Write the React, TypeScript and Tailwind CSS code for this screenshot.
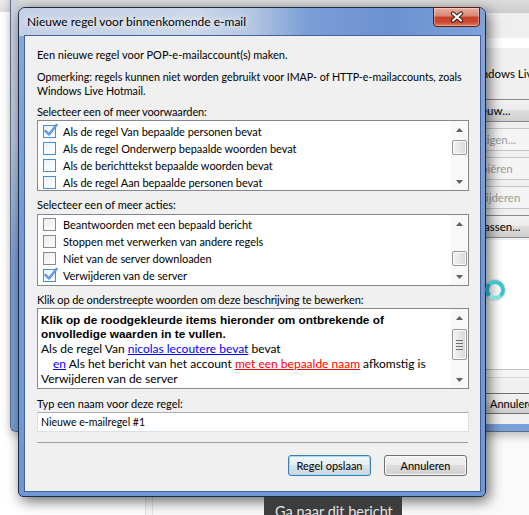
import React from "react";

const ui = "font-[family-name:Lato,'Liberation_Sans',sans-serif]";

function Check({ checked, blue }: { checked?: boolean; blue?: boolean }) {
  return (
    <span
      className={
        blue || checked
          ? "relative block w-[13px] h-[13px] shrink-0 border border-[#4a8fd6] bg-[linear-gradient(135deg,#e8f3fc,#ffffff)]"
          : "relative block w-[13px] h-[13px] shrink-0 border border-[#8a8a8a] bg-[linear-gradient(135deg,#ececec,#ffffff)]"
      }
    >
      {checked && (
        <svg className="absolute left-[-1px] top-[-2px] overflow-visible" width="15" height="14" viewBox="0 0 15 14">
          <path d="M2.5 7 L6 10.5 L13.5 1" fill="none" stroke="#3c86d4" strokeWidth="2.4" strokeLinecap="round" strokeLinejoin="round" />
          <path d="M2.5 7 L6 10.5 L13.5 1" fill="none" stroke="#8cc2ef" strokeWidth="1" strokeLinecap="round" strokeLinejoin="round" />
        </svg>
      )}
    </span>
  );
}

function Arrow({ down }: { down?: boolean }) {
  return (
    <div className="h-[17px] flex items-center justify-center">
      <svg width="7" height="4" viewBox="0 0 7 4">
        <path d={down ? "M0 0 L7 0 L3.5 4Z" : "M0 4 L7 4 L3.5 0Z"} fill="#5f5f5f" />
      </svg>
    </div>
  );
}

function ScrollBar({ thumb, grip }: { thumb: string; grip?: boolean }) {
  return (
    <div className="w-[17px] shrink-0 flex flex-col bg-[#f8f8f8]">
      <Arrow />
      <div className="flex-1">
        <div
          className={
            "mx-[1px] w-[15px] rounded-[2px] border border-[#979797] bg-[linear-gradient(90deg,#f4f4f4,#e6e6e6_50%,#d6d6d6)] shadow-[inset_0_0_0_1px_#fbfbfb] flex flex-col items-center justify-center gap-[2px] " +
            thumb
          }
        >
          {grip && (
            <>
              <span className="block w-[7px] h-[1px] bg-[#6f6f6f]" />
              <span className="block w-[7px] h-[1px] bg-[#6f6f6f]" />
              <span className="block w-[7px] h-[1px] bg-[#6f6f6f]" />
              <span className="block w-[7px] h-[1px] bg-[#6f6f6f]" />
            </>
          )}
        </div>
      </div>
      <Arrow down />
    </div>
  );
}

type Item = { label: string; checked?: boolean };

function ListBox({ items, focus, pad, height, thumb }: { items: Item[]; focus?: boolean; pad: string; height: string; thumb: string }) {
  return (
    <div className={"flex bg-white border border-[#828790] " + height}>
      <div className={"flex-1 pl-[5px] tracking-[-0.05px] " + pad}>
        {items.map((it) => (
          <div key={it.label} className="h-[17px] flex items-center gap-[7px] whitespace-nowrap">
            <Check checked={it.checked} blue={focus} />
            <span>{it.label}</span>
          </div>
        ))}
      </div>
      <ScrollBar thumb={thumb} />
    </div>
  );
}

function WinButton({ label, primary }: { label: string; primary?: boolean }) {
  return (
    <div
      className={
        primary
          ? "w-[83px] h-[21px] rounded-[3px] border border-[#3c7fb1] bg-[linear-gradient(180deg,#f0f6fa_0%,#e8eff4_49%,#d8e2e9_50%,#ccd7df_100%)] shadow-[inset_0_0_0_1px_#a6dcf6] flex items-center justify-center"
          : "w-[83px] h-[21px] rounded-[3px] border border-[#707070] bg-[linear-gradient(180deg,#f2f2f2_0%,#ebebeb_49%,#dddddd_50%,#cfcfcf_100%)] shadow-[inset_0_0_0_1px_#fafafa] flex items-center justify-center"
      }
    >
      {label}
    </div>
  );
}

function BgButton({ label, disabled }: { label: string; disabled?: boolean }) {
  return (
    <div
      className={
        disabled
          ? "h-[23px] rounded-[3px] border border-[#c2c6c9] bg-[#f4f4f4] text-[#9a9a9a] flex items-center justify-center"
          : "h-[23px] rounded-[3px] border border-[#8a8a8a] bg-[linear-gradient(180deg,#f2f2f2_0%,#ebebeb_49%,#dddddd_50%,#cfcfcf_100%)] text-black flex items-center justify-center"
      }
    >
      {label}
    </div>
  );
}

export default function App() {
  return (
    <div className={"relative w-[529px] h-[515px] overflow-hidden bg-[#fcfcfc] text-[11px] leading-[15px] text-black " + ui}>
      {/* main window behind everything */}
      <div className="h-[12px] bg-[linear-gradient(180deg,#eeeeee,#dedede)]" />
      <div className="flex h-[503px]">
        <div className="w-[146px] border-r border-[#e2e2e2] bg-white" />
        <div className="w-[7px] border-r border-[#e4e4e4] bg-[#f8f8f8]" />
        <div className="flex-1 bg-[#fafafa]" />
      </div>

      {/* rules window in the background */}
      <div className="absolute left-[10px] top-[-10px] w-[540px] h-[442px] rounded-bl-[6px] border-l border-b border-[#5d6d86] bg-[linear-gradient(180deg,#cdd5df_0%,#b9c7dc_35%,#7fa1d8_60%,#79a0db_100%)] pl-[7px] pb-[7px] shadow-[0_4px_10px_rgba(0,0,0,0.25)]">
        <div className="h-full flex flex-col bg-[#f0f0f0]">
          <div className="h-[10px] bg-[#e2e2e2]" />
          <div className="h-[13px] bg-[linear-gradient(180deg,#dcdcdc,#cdcdcd)]" />
          <div className="h-[25px] bg-[#efefef]" />
          <div className="h-[10px] bg-white" />
          <div className="h-[192px] flex flex-col">
            <div className="mt-[18px] ml-[449px] text-[11.5px] whitespace-nowrap">Windows Live Mail</div>
            <div className="mt-[18px] ml-auto mr-[12px] w-[96px] flex flex-col gap-[6px] text-[11.5px]">
              <BgButton label="Nieuw..." />
              <BgButton label="Wijzigen..." disabled />
              <BgButton label="Kopiëren" disabled />
              <BgButton label="Verwijderen" disabled />
              <BgButton label="Toepassen..." />
            </div>
          </div>
          <div className="h-[130px] bg-white border-b border-[#c5c5c5]" />
          <div className="h-[8px] bg-[#f5f5f5] border-b border-[#d6d6d6]" />
          <div className="flex-1 pt-[15px]">
            <div className="ml-[453px] w-[88px] h-[21px] rounded-[3px] border border-[#707070] bg-[linear-gradient(180deg,#f2f2f2_0%,#ebebeb_49%,#dddddd_50%,#cfcfcf_100%)] flex items-center justify-center">
              Annuleren
            </div>
          </div>
        </div>
      </div>

      {/* the dialog */}
      <div className="absolute left-[18px] top-[7px] w-[468px] h-[490px] rounded-t-[7px] rounded-b-[5px] border border-[#1d2a40] bg-[linear-gradient(180deg,#86a8de,#7299d6_50%,#6f97d6)] shadow-[3px_4px_14px_rgba(0,0,0,0.6)] flex flex-col">
        <div className="h-[28px] shrink-0 flex items-center pl-[8px] rounded-t-[6px] bg-[linear-gradient(90deg,#c3d0e5_0%,#cbd6e8_38%,#b3c6e3_50%,#7a9dd6_62%,#6b92d0_80%,#7ea2d9_100%)]">
          <span className="text-[12px] leading-[16px] whitespace-nowrap [text-shadow:0_0_6px_#ffffff,0_0_10px_#ffffff]">
            Nieuwe regel voor binnenkomende e-mail
          </span>
        </div>
        <div className="absolute right-[5px] top-[-1px] w-[47px] h-[20px] rounded-b-[4px] border border-[#5a1c14] bg-[linear-gradient(180deg,#eab0a2_0%,#da8470_45%,#c4412b_50%,#c94a31_78%,#e27a60_100%)] shadow-[inset_0_0_0_1px_rgba(255,255,255,0.35)] flex items-center justify-center">
          <svg width="14" height="12" viewBox="0 0 14 12">
            <path d="M3 2.5 L11 9.5 M11 2.5 L3 9.5" stroke="#3a1810" strokeWidth="4.2" strokeLinecap="round" />
            <path d="M3 2.5 L11 9.5 M11 2.5 L3 9.5" stroke="#ffffff" strokeWidth="2.2" strokeLinecap="round" />
          </svg>
        </div>

        <div className="flex-1 ml-[6px] mr-[5px] mb-[5px] bg-[#f0f0f0] shadow-[0_0_0_1px_#43619a] flex flex-col pl-[12px] pr-[11px] pt-[11px]">
          <div className="whitespace-nowrap">Een nieuwe regel voor POP-e-mailaccount(s) maken.</div>
          <div className="mt-[8px] text-[10.7px] leading-[14px] whitespace-nowrap">
            Opmerking: regels kunnen niet worden gebruikt voor IMAP- of HTTP-e-mailaccounts, zoals
            <br />
            Windows Live Hotmail.
          </div>
          <div className="mt-[6px] tracking-[-0.12px]">Selecteer een of meer voorwaarden:</div>
          <div className="mt-[1px]">
            <ListBox
              focus
              height="h-[71px]"
              pad="pt-[2px]"
              thumb="mt-[2px] h-[15px]"
              items={[
                { label: "Als de regel Van bepaalde personen bevat", checked: true },
                { label: "Als de regel Onderwerp bepaalde woorden bevat" },
                { label: "Als de berichttekst bepaalde woorden bevat" },
                { label: "Als de regel Aan bepaalde personen bevat" },
              ]}
            />
          </div>
          <div className="mt-[6px]">Selecteer een of meer acties:</div>
          <div className="mt-[2px]">
            <ListBox
              height="h-[72px]"
              pad="pt-[1px]"
              thumb="mt-[19px] h-[15px]"
              items={[
                { label: "Beantwoorden met een bepaald bericht" },
                { label: "Stoppen met verwerken van andere regels" },
                { label: "Niet van de server downloaden" },
                { label: "Verwijderen van de server", checked: true },
              ]}
            />
          </div>
          <div className="mt-[6px] whitespace-nowrap tracking-[-0.12px]">Klik op de onderstreepte woorden om deze beschrijving te bewerken:</div>
          <div className="mt-[1px] h-[81px] flex bg-white border border-[#828790]">
            <div className="flex-1 pl-[3px] pt-[4px] whitespace-nowrap text-[12px]">
              <div className="font-bold font-[family-name:'Liberation_Sans',Arial,sans-serif] text-[11.8px] leading-[14px]">
                Klik op de roodgekleurde items hieronder om ontbrekende of
                <br />
                onvolledige waarden in te vullen.
              </div>
              <div>
                Als de regel Van <span className="text-[#0000ff] underline">nicolas lecoutere bevat</span> bevat
              </div>
              <div className="pl-[12px]">
                <span className="text-[#0000ff] underline">en</span> Als het bericht van het account{" "}
                <span className="text-[#ff0000] underline">met een bepaalde naam</span> afkomstig is
              </div>
              <div>Verwijderen van de server</div>
            </div>
            <ScrollBar grip thumb="mt-[3px] h-[31px]" />
          </div>
          <div className="mt-[7px]">Typ een naam voor deze regel:</div>
          <div className="mt-[1px] h-[20px] bg-white border border-[#dbdfe6] border-t-[#abadb3] pl-[3px] flex items-center text-[10.5px]">
            Nieuwe e-mailregel #1
          </div>
          <div className="mt-[10px] mr-[1px] h-[1px] bg-[#a0a0a0]" />
          <div className="mt-[12px] pr-[2px] flex justify-end gap-[13px]">
            <WinButton label="Regel opslaan" primary />
            <WinButton label="Annuleren" />
          </div>
        </div>
      </div>

      {/* busy cursor */}
      <div className="absolute left-[485px] top-[280px] w-[20px] h-[20px] rounded-full border-[4px] border-[#3cc3cb] border-l-[#1f8b98] border-b-[#7fdde2] shadow-[0_0_2px_rgba(0,0,0,0.4)]" />

      {/* tooltip */}
      <div className="absolute left-[264px] top-[497px] w-[138px] h-[30px] bg-[#3d3d3d] text-[#e4e4e4] text-[14.5px] leading-[18px] pl-[11px] pt-[6px] whitespace-nowrap">
        Ga naar dit bericht
      </div>
    </div>
  );
}
